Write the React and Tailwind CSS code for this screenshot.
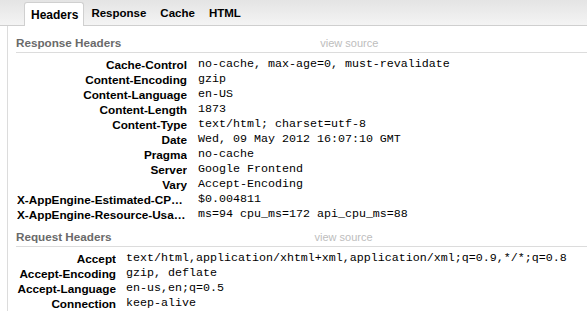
import React from 'react';

const responseHeaders = [
    ['Cache-Control', 'no-cache, max-age=0, must-revalidate'],
    ['Content-Encoding', 'gzip'],
    ['Content-Language', 'en-US'],
    ['Content-Length', '1873'],
    ['Content-Type', 'text/html; charset=utf-8'],
    ['Date', 'Wed, 09 May 2012 16:07:10 GMT'],
    ['Pragma', 'no-cache'],
    ['Server', 'Google Frontend'],
    ['Vary', 'Accept-Encoding'],
    ['X-AppEngine-Estimated-CPM-US-Dollars', '$0.004811'],
    ['X-AppEngine-Resource-Usage', 'ms=94 cpu_ms=172 api_cpu_ms=88'],
];

const requestHeaders = [
    ['Accept', 'text/html,application/xhtml+xml,application/xml;q=0.9,*/*;q=0.8'],
    ['Accept-Encoding', 'gzip, deflate'],
    ['Accept-Language', 'en-us,en;q=0.5'],
    ['Connection', 'keep-alive'],
];

function Section({ title, sourceLeft, labelWidth, valuePad, rows }) {
    return (
        <div>
            <div className="flex items-end h-[17px] border-b border-[#dcdcdc]">
                <span className="font-bold text-[11.7px] text-[#6a6a6a] leading-[14px] pb-[2px]">{title}</span>
                <span className={`${sourceLeft} text-[11px] text-[#bdbdbd] leading-[14px] pb-[2px]`}>view source</span>
            </div>
            <div className="pt-[4px] pb-[9px]">
                {rows.map(([name, value]) => (
                    <div key={name} className="flex h-[15px] items-center">
                        <div className={`${labelWidth} shrink-0 text-right font-bold text-[11.75px] text-black truncate leading-[15px]`}>
                            {name}
                        </div>
                        <div className={`${valuePad} whitespace-nowrap text-[11.67px] leading-[15px] text-black`} style={{ fontFamily: '"Liberation Mono", monospace' }}>
                            {value}
                        </div>
                    </div>
                ))}
            </div>
        </div>
    );
}

export default function App() {
    const tabs = ['Headers', 'Response', 'Cache', 'HTML'];
    return (
        <div className="w-[587px] h-[311px] overflow-hidden bg-white" style={{ fontFamily: '"Liberation Sans", Arial, sans-serif' }}>
            {/* Tab bar */}
            <div className="h-[26px] flex items-end pl-[24px] bg-gradient-to-b from-[#e4e4e4] to-[#f4f4f4] border-b border-[#cfcfcf]">
                {tabs.map((t, i) => (
                    <div
                        key={t}
                        className={`h-[23px] flex items-center font-bold text-black ${
                            i === 0
                                ? 'text-[12px] pl-[6px] pr-[5px] bg-white border border-b-0 border-[#d0d0d0] rounded-t-[3px] mb-[-1px] h-[24px]'
                                : 'text-[11.5px] px-[7px]'
                        }`}
                    >
                        {t}
                    </div>
                ))}
            </div>

            {/* Panel */}
            <div className="ml-[7px] border-l border-[#dcdcdc] pl-[8px] pt-[10px] h-[285px]">
                <Section title="Response Headers" sourceLeft="ml-[199px]" labelWidth="w-[170px] ml-[1px]" valuePad="pl-[11px]" rows={responseHeaders} />
                <div className="mt-[-1px]">
                    <Section title="Request Headers" sourceLeft="ml-[203px]" labelWidth="w-[100px]" valuePad="pl-[10px]" rows={requestHeaders} />
                </div>
            </div>
        </div>
    );
}
